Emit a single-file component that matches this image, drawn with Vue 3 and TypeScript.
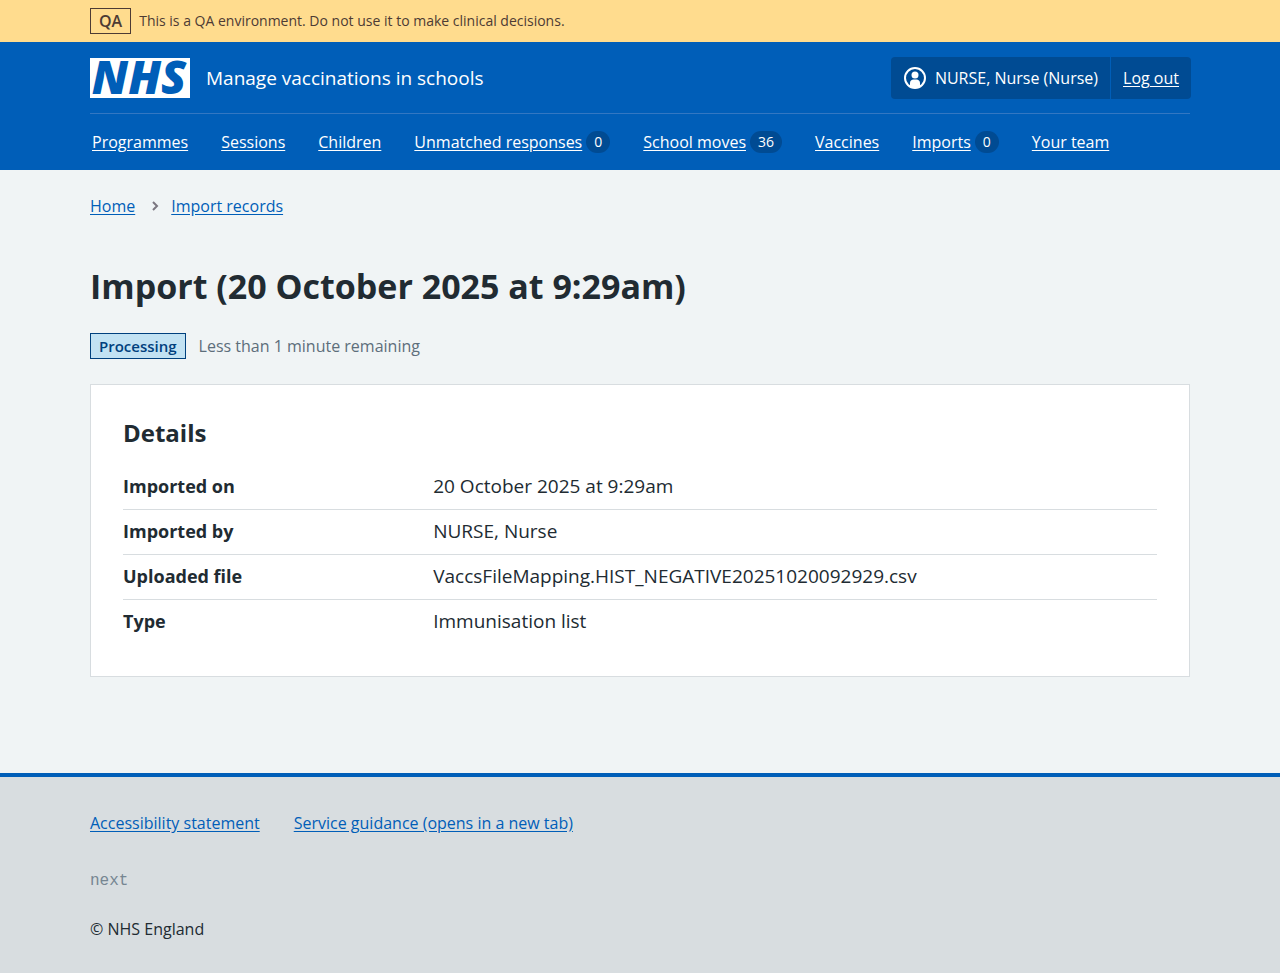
<script setup lang="ts">
interface NavItem {
  label: string
  count?: number
}

interface DetailRow {
  key: string
  value: string
}

const navItems: NavItem[] = [
  { label: 'Programmes' },
  { label: 'Sessions' },
  { label: 'Children' },
  { label: 'Unmatched responses', count: 0 },
  { label: 'School moves', count: 36 },
  { label: 'Vaccines' },
  { label: 'Imports', count: 0 },
  { label: 'Your team' },
]

const details: DetailRow[] = [
  { key: 'Imported on', value: '20 October 2025 at 9:29am' },
  { key: 'Imported by', value: 'NURSE, Nurse' },
  { key: 'Uploaded file', value: 'VaccsFileMapping.HIST_NEGATIVE20251020092929.csv' },
  { key: 'Type', value: 'Immunisation list' },
]
</script>

<template>
  <div class="page">
    <div class="environment">
      <div class="container environment-inner">
        <strong class="tag tag-environment">QA</strong>
        <span>This is a QA environment. Do not use it to make clinical decisions.</span>
      </div>
    </div>

    <header class="header">
      <div class="container">
        <div class="header-top">
          <a class="service" href="#">
            <svg class="logo" viewBox="0 0 100 40" role="img" aria-label="NHS">
              <rect width="100" height="40" fill="#fff" />
              <text x="49" y="36" text-anchor="middle" class="logo-text">NHS</text>
            </svg>
            <span>Manage vaccinations in schools</span>
          </a>
          <div class="account">
            <span class="account-item">
              <svg class="account-icon" viewBox="0 0 24 24" aria-hidden="true">
                <circle cx="12" cy="12" r="10" fill="none" stroke="#fff" stroke-width="2" />
                <circle cx="12" cy="9" r="3.5" fill="#fff" />
                <path d="M7 20.500v-3.500c0-2 1.600-3.500 3.500-3.500h3c1.900 0 3.500 1.500 3.500 3.500v3.500c-3 1.700-7 1.700-10 0Z" fill="#fff" />
              </svg>
              NURSE, Nurse (Nurse)
            </span>
            <span class="account-item"><a href="#">Log out</a></span>
          </div>
        </div>
        <nav class="nav" aria-label="Menu">
          <ul>
            <li v-for="item in navItems" :key="item.label">
              <a href="#">{{ item.label }}</a>
              <span v-if="item.count !== undefined" class="count">{{ item.count }}</span>
            </li>
          </ul>
        </nav>
      </div>
    </header>

    <div class="content">
      <div class="container">
        <nav class="breadcrumb" aria-label="Breadcrumb">
          <a href="#">Home</a>
          <svg class="chevron" viewBox="0 0 8 12" aria-hidden="true">
            <path d="M2 2l4 4-4 4" fill="none" stroke="#7b7680" stroke-width="2" />
          </svg>
          <a href="#">Import records</a>
        </nav>
        <main>
          <h1>Import (20 October 2025 at 9:29am)</h1>
          <div class="status">
            <strong class="tag tag-status">Processing</strong>
            <span>Less than 1 minute remaining</span>
          </div>
          <section class="card">
            <h2>Details</h2>
            <dl>
              <div v-for="row in details" :key="row.key" class="row">
                <dt>{{ row.key }}</dt>
                <dd>{{ row.value }}</dd>
              </div>
            </dl>
          </section>
        </main>
      </div>
    </div>

    <footer class="footer">
      <div class="container">
        <ul class="footer-links">
          <li><a href="#">Accessibility statement</a></li>
          <li><a href="#">Service guidance (opens in a new tab)</a></li>
        </ul>
        <p class="version">next</p>
        <p class="copyright">© NHS England</p>
      </div>
    </footer>
  </div>
</template>

<style>
html {
  background: #d8dde0;
}
body {
  margin: 0;
}
</style>

<style scoped>
.page {
  color: #212b32;
  font-family: "Open Sans", "Noto Sans", sans-serif;
  font-size: 16px;
  line-height: 24px;
}
.container {
  max-width: 1100px;
  margin: 0 auto;
}
a {
  color: #005eb8;
  text-underline-offset: 2px;
}
ul,
dl,
dd,
p {
  margin: 0;
  padding: 0;
}
ul {
  list-style: none;
}
.environment {
  background: #ffdc8e;
  color: #4d3b34;
  font-size: 14px;
  padding: 8px 0;
}
.environment-inner {
  display: flex;
  align-items: center;
  gap: 8px;
}
.tag {
  border: 1px solid;
  padding: 0 8px;
  font-size: 16px;
  line-height: 24px;
  font-weight: 600;
}
.tag-status {
  background: #c2e2f3;
  color: #00407d;
  font-size: 15px;
}
.header {
  background: #005eb8;
  color: #fff;
}
.header a {
  color: #fff;
}
.header-top {
  display: flex;
  align-items: center;
  justify-content: space-between;
  padding: 15px 0 14px;
  border-bottom: 1px solid #3377c2;
}
.header .service {
  display: flex;
  align-items: center;
  gap: 16px;
  font-size: 19px;
  text-decoration: none;
}
.logo {
  display: block;
  width: 100px;
  height: 40px;
  overflow: visible;
}
.logo-text {
  fill: #005eb8;
  font-family: "Open Sans", "Noto Sans", sans-serif;
  font-size: 46px;
  font-style: italic;
  font-weight: 800;
}
.account {
  display: flex;
  margin-right: -1px;
  background: #004b93;
  border-radius: 4px;
}
.account-item {
  display: flex;
  align-items: center;
  gap: 8px;
  padding: 9px 12px;
}
.account-item + .account-item {
  border-left: 1px solid #005eb8;
}
.account-icon {
  width: 24px;
  height: 24px;
}
.nav ul {
  display: flex;
  gap: 33px;
  padding: 16px 2px;
}
.nav li {
  display: flex;
  align-items: center;
  gap: 4px;
}
.count {
  background: #004b93;
  border-radius: 12px;
  padding: 0 8px;
  font-size: 14px;
  line-height: 22px;
}
.content {
  background: #f0f4f5;
  padding: 24px 0 96px;
}
.breadcrumb {
  display: flex;
  align-items: center;
  gap: 12px;
}
.chevron {
  width: 8px;
  height: 12px;
  margin-left: 4px;
}
h1 {
  margin: 46px 0 24px;
  font-size: 34px;
  line-height: 45px;
  font-weight: 700;
}
.status {
  display: flex;
  align-items: center;
  gap: 13px;
  margin-bottom: 25px;
  color: #5d6e7b;
}
.card {
  background: #fff;
  border: 1px solid #d8dde0;
  padding: 32px;
}
h2 {
  margin: 0 0 16px;
  font-size: 24px;
  line-height: 32px;
  font-weight: 700;
}
.row {
  display: flex;
  padding: 7px 0 9px;
  font-size: 19px;
  line-height: 28px;
}
.row + .row {
  border-top: 1px solid #d8dde0;
}
dt {
  width: 30%;
  font-size: 18px;
  font-weight: 700;
}
.footer {
  background: #d8dde0;
  border-top: 4px solid #005eb8;
  padding: 32px 0;
}
.footer-links {
  display: flex;
  gap: 34px;
  line-height: 28px;
}
.version {
  margin: 32px 0 24px;
  color: #768692;
  font-family: "Liberation Mono", monospace;
}
</style>
